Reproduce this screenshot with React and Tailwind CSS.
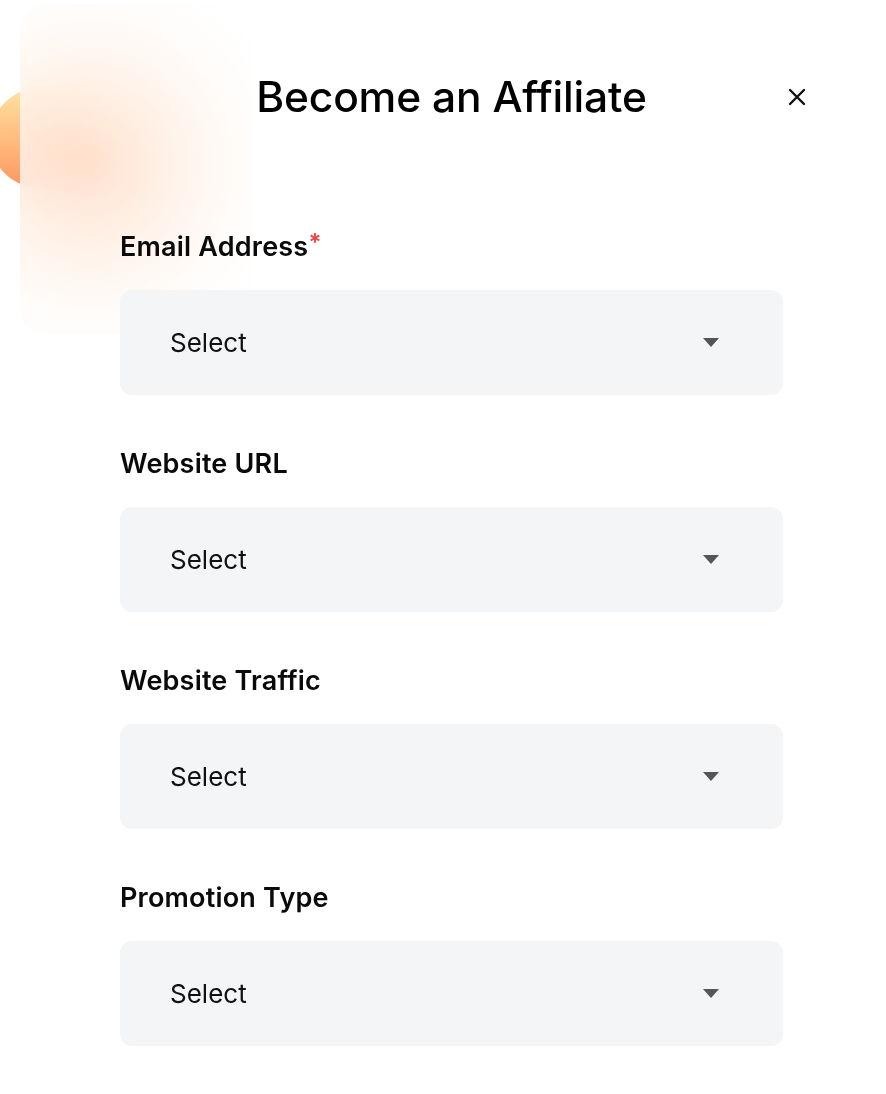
import React from "react";

function Field({ label, required }) {
  return (
    <div className="flex flex-col">
      <div className="h-[30px] flex items-center text-[27px] font-semibold text-[#0a0a0a] leading-none tracking-[0.2px]">
        {label}
        {required && <span className="text-[#ef4444] text-[24px] self-start mt-[0px]">*</span>}
      </div>
      <div className="mt-[29px] h-[105px] w-[663px] rounded-[12px] bg-[#f4f5f7] flex items-center pl-[50px] pr-[64px]">
        <span className="flex-1 text-[26px] text-[#111] leading-none">Select</span>
        <svg width="16" height="10" viewBox="0 0 16 10" className="text-[#555]">
          <path d="M0 0 H16 L8 9 Z" fill="currentColor" />
        </svg>
      </div>
    </div>
  );
}

export default function App() {
  return (
    <div className="relative w-[886px] h-[1094px] bg-white overflow-hidden" style={{ fontFamily: "Inter, 'Noto Sans', sans-serif" }}>
      {/* decorative blob */}
      <div className="absolute left-[-10px] top-[88px] w-[100px] h-[100px] rounded-full bg-gradient-to-b from-[#ffe3a0] to-[#ff9560]" />
      <div className="absolute left-[20px] top-[4px] w-[232px] h-[330px] rounded-[24px] bg-white/85 backdrop-blur-xl overflow-hidden">
        <div className="absolute left-[-140px] top-[-50px] w-[420px] h-[420px] rounded-full bg-[radial-gradient(circle,_rgba(255,175,125,0.36)_0%,_rgba(255,200,160,0.22)_30%,_rgba(255,230,210,0.1)_52%,_rgba(255,255,255,0)_70%)]" />
      </div>

      <div className="relative ml-[120px] w-[663px] pt-[71px]">
        <div className="relative flex items-center justify-center h-[52px]">
          <h1 className="text-[42.5px] font-medium text-black leading-none tracking-[-0.2px]">Become an Affiliate</h1>
          <button className="absolute right-[-24px] top-1/2 -translate-y-1/2 w-[20px] h-[20px] flex items-center justify-center">
            <svg width="18" height="18" viewBox="0 0 18 18">
              <path d="M2 2 L16 16 M16 2 L2 16" stroke="#111" strokeWidth="2.4" strokeLinecap="round" />
            </svg>
          </button>
        </div>

        <div className="mt-[108px] flex flex-col gap-[53px]">
          <Field label="Email Address" required />
          <Field label="Website URL" />
          <Field label="Website Traffic" />
          <Field label="Promotion Type" />
        </div>
      </div>
    </div>
  );
}
